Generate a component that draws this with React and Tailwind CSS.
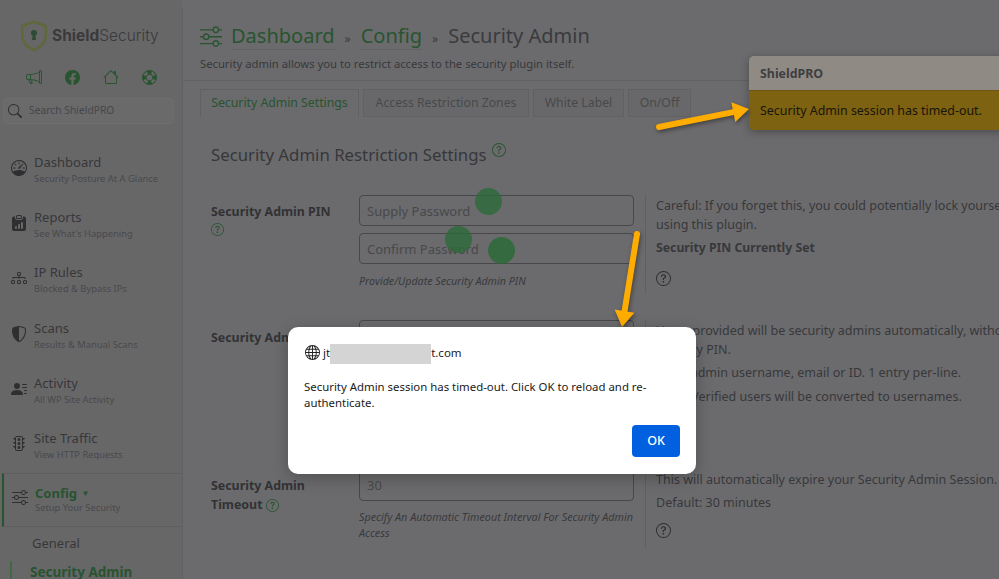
import React from "react";
import { BsSpeedometer, BsClipboardDataFill, BsDiagram3, BsShieldShaded, BsPersonLinesFill, BsStoplights, BsSliders, BsQuestionCircle, BsGlobe, BsMegaphone, BsFacebook, BsHouse, BsLifePreserver, BsSearch } from "react-icons/bs";

const nav = [
  { Icon: BsSpeedometer, t: "Dashboard", s: "Security Posture At A Glance" },
  { Icon: BsClipboardDataFill, t: "Reports", s: "See What's Happening" },
  { Icon: BsDiagram3, t: "IP Rules", s: "Blocked & Bypass IPs" },
  { Icon: BsShieldShaded, t: "Scans", s: "Results & Manual Scans" },
  { Icon: BsPersonLinesFill, t: "Activity", s: "All WP Site Activity" },
  { Icon: BsStoplights, t: "Site Traffic", s: "View HTTP Requests" },
];

function Sidebar() {
  return (
    <aside className="w-[182px] h-[579px] shrink-0 bg-[#676768] overflow-hidden">
      <div className="flex items-center pl-[20px] pt-[19px] h-[52px]">
        <svg width="28" height="32" viewBox="0 0 28 32" className="shrink-0">
          <path d="M14 1.8 L25.8 6 V15 C25.8 22.5 20.5 27.5 14 30.2 C7.5 27.5 2.2 22.5 2.2 15 V6 Z" fill="none" stroke="#5f683b" strokeWidth="2.6" strokeLinejoin="round" />
          <circle cx="14" cy="13" r="3" fill="#2f4a35" />
          <path d="M12.8 14 H15.2 L16 20 H12 Z" fill="#2f4a35" />
        </svg>
        <span className="ml-[4px] text-[15.5px] leading-none text-[#3a3a3c] font-['Inter',sans-serif] font-light whitespace-nowrap"><b className="font-bold">Shield</b>Security</span>
      </div>
      <div className="flex justify-between items-center pl-[26px] pr-[25px] mt-[17px] text-[#285430]">
        <BsMegaphone size={16} />
        <BsFacebook size={15} />
        <BsHouse size={16} />
        <BsLifePreserver size={15} />
      </div>
      <div className="mx-[3px] mt-[13px] h-[26px] w-[171px] rounded-[4px] border border-[#6e6e6f] bg-[#6a6a6b] flex items-center pl-[4px] text-[#2f2f31]">
        <BsSearch size={14} />
        <span className="ml-[7px] text-[10.3px] text-[#47474a]">Search ShieldPRO</span>
      </div>
      <ul className="mt-[29px]">
        {nav.map(({ Icon, t, s }) => (
          <li key={t} className="h-[55.2px] pl-[11px] flex text-[#333336]">
            <Icon size={16} className="mt-[7px] shrink-0 text-[#2f2f31]" />
            <div className="ml-[7px]">
              <div className="text-[13px] leading-[18px] text-[#37373a]">{t}</div>
              <div className="text-[9.35px] leading-[14px] mt-[1px] text-[#49494c]">{s}</div>
            </div>
          </li>
        ))}
        <li className="h-[54px] -mt-[11px] ml-[2px] border-l-2 border-y border-l-[#285430] border-y-[#5f5f60] pl-[8px] flex">
          <BsSliders size={16} className="mt-[15px] shrink-0 text-[#2f2f31]" />
          <div className="ml-[7px] mt-[10px]">
            <div className="text-[13px] leading-[18px] font-bold text-[#285430]">Config <span className="text-[8px] align-[2px] ml-[1px]">▼</span></div>
            <div className="text-[9.35px] leading-[14px] -mt-[1px] text-[#49494c]">Setup Your Security</div>
          </div>
        </li>
        <li className="pl-[32px] mt-[7px] text-[13px] leading-[18px] text-[#37373a]">General</li>
        <li className="ml-[10px] mt-[9px] pl-[18px] border-l-2 border-[#3f6a45] text-[13.5px] leading-[22px] font-bold text-[#285430] whitespace-nowrap">Security Admin</li>
      </ul>
    </aside>
  );
}

const Help = ({ className = "" }) => <BsQuestionCircle size={13} className={"inline-block text-[#285430] " + className} />;
const Q = ({ className = "" }) => <BsQuestionCircle size={15} className={"text-[#2d2d30] " + className} />;

function Input({ ph, val }) {
  return (
    <div className={"h-[31px] w-[275px] rounded-[4px] border border-[#48484b] px-[7px] flex items-center text-[13px] text-[#48484b] " + (ph ? "pt-[2px]" : "pt-[1px]")}>{ph || val}</div>
  );
}

function Row({ label, children, right, className = "", labelClass = "pt-[7px]" }) {
  return (
    <div className={"flex " + className}>
      <div className={"w-[148px] shrink-0 text-[12.4px] leading-[19px] font-bold text-[#323235] " + labelClass}>{label}</div>
      <div className="w-[275px] shrink-0">{children}</div>
      <div className="ml-[11px] pl-[10px] border-l border-[#5f5f60] w-[420px] shrink-0 text-[12.5px] text-[#38383b]">{right}</div>
    </div>
  );
}

function Main() {
  return (
    <main className="flex-1 min-w-0 h-[579px] overflow-hidden border-l border-[#616162] mt-[8px]">
      <header className="pl-[17px] pt-[13px] h-[73px] border-b border-[#616162]">
        <div className="flex items-center h-[30px] text-[20px] leading-[30px] text-[#3a3a3d]">
          <BsSliders size={22} className="text-[#285430]" />
          <a className="ml-[9px] text-[#285430] border-b border-[#616162] leading-[27px]">Dashboard</a>
          <span className="mx-[10px] text-[12px] mt-[6px]">»</span>
          <a className="text-[#285430] border-b border-[#616162] leading-[27px]">Config</a>
          <span className="mx-[10px] text-[12px] mt-[6px]">»</span>
          <span>Security Admin</span>
        </div>
        <p className="mt-[6px] text-[11.25px] leading-[14px] text-[#38383b]">Security admin allows you to restrict access to the security plugin itself.</p>
      </header>
      <div className="flex pl-[17px] mt-[8px] gap-[4px] text-[12.25px] text-[#48484b]">
        <div className="h-[28px] w-[159px] flex items-center justify-center border border-b-0 border-[#616162] text-[#285430]">Security Admin Settings</div>
        <div className="h-[28px] w-[166px] flex items-center justify-center border border-[#616162] bg-[#68686a]">Access Restriction Zones</div>
        <div className="h-[28px] w-[91px] flex items-center justify-center border border-[#616162] bg-[#68686a]">White Label</div>
        <div className="h-[28px] w-[63px] flex items-center justify-center border border-[#616162] bg-[#68686a]">On/Off</div>
      </div>
      <div className="pl-[28px]">
        <h2 className="mt-[25px] text-[16.8px] leading-[26px] text-[#37373a] flex">Security Admin Restriction Settings<Help className="ml-[5px] mt-[1px] w-[14px] h-[14px]" /></h2>
        <Row className="mt-[27px] h-[98px]" label={<>Security Admin PIN<br /><Help className="-mt-[5px]" /></>} right={<div className="pt-[1px]">
          <p className="leading-[19px] whitespace-nowrap">Careful: If you forget this, you could potentially lock yourself out from<br />using this plugin.</p>
          <p className="leading-[19px] mt-[4px] font-bold text-[12.25px]">Security PIN Currently Set</p>
          <Q className="mt-[14px]" />
        </div>}>
          <Input ph="Supply Password" />
          <div className="mt-[7px]"><Input ph="Confirm Password" /></div>
          <p className="mt-[9px] text-[10.7px] leading-[16px] italic text-[#3a3a3d]">Provide/Update Security Admin PIN</p>
        </Row>
        <Row className="mt-[27px] h-[123px]" labelClass="pt-[8px]" label="Security Admin Users" right={<div className="pt-[1px]">
          <p className="leading-[19px] whitespace-nowrap">Users provided will be security admins automatically, without needing the<br />Security PIN.</p>
          <p className="leading-[19px] mt-[4px]">Enter admin username, email or ID. 1 entry per-line.</p>
          <p className="leading-[19px] mt-[5px]">Note: Verified users will be converted to usernames.</p>
        </div>}>
          <div className="h-[123px] rounded-[4px] border border-[#48484b]" />
        </Row>
        <Row className="mt-[27px] h-[78px]" labelClass="pt-[6px]" label={<>Security Admin<br />Timeout <Help /></>} right={<>
          <p className="leading-[19px]">This will automatically expire your Security Admin Session.</p>
          <p className="leading-[19px] mt-[4px]">Default: 30 minutes</p>
          <Q className="mt-[11px]" />
        </>}>
          <Input val="30" />
          <p className="mt-[8px] text-[10.8px] leading-[16px] italic text-[#3a3a3d]">Specify An Automatic Timeout Interval For Security Admin Access</p>
        </Row>
      </div>
    </main>
  );
}

function Arrow({ x1, y1, x2, y2, left, top, w, h }) {
  const dx = x2 - x1, dy = y2 - y1, len = Math.hypot(dx, dy);
  const ux = dx / len, uy = dy / len;
  const bx = x2 - ux * 16, by = y2 - uy * 16;
  const px = -uy * 10, py = ux * 10;
  return (
    <svg width={w} height={h} className="absolute" style={{ left, top, filter: "drop-shadow(1px 2px 2px rgba(0,0,0,.4))" }}>
      <line x1={x1 - left} y1={y1 - top} x2={bx - left} y2={by - top} stroke="#ffac00" strokeWidth="6" strokeLinecap="round" />
      <polygon points={`${x2 - left},${y2 - top} ${bx + px - left},${by + py - top} ${bx - px - left},${by - py - top}`} fill="#ffac00" />
    </svg>
  );
}

export default function App() {
  return (
    <div className="relative w-[999px] h-[579px] overflow-hidden flex bg-[#6b6b6d] font-['Noto_Sans',sans-serif]">
      <Sidebar />
      <Main />

      <div className="absolute left-[475px] top-[188px] w-[27px] h-[27px] rounded-full bg-[#2c6a38]/80" />
      <div className="absolute left-[445px] top-[226px] w-[27px] h-[27px] rounded-full bg-[#2c6a38]/80" />
      <div className="absolute left-[488px] top-[237px] w-[27px] h-[27px] rounded-full bg-[#2c6a38]/85" />

      <div className="absolute left-[749px] top-[56px] w-[260px] h-[74px] rounded-[5px] overflow-hidden shadow-[0_2px_8px_rgba(0,0,0,0.3)] text-[12.4px]">
        <div className="h-[34px] bg-[#8f8a84] pl-[11px] pt-[2px] flex items-center font-bold text-[#3f3f41]">ShieldPRO</div>
        <div className="h-[40px] bg-[#7d6211] border-t border-[#6d5510] pl-[11px] pt-[1px] flex items-center text-[#18150a]">Security Admin session has timed-out.</div>
      </div>

      <Arrow x1={659} y1={127} x2={749} y2={109} left={650} top={95} w={105} h={45} />
      <Arrow x1={637} y1={234} x2={622} y2={327} left={605} top={225} w={45} h={110} />

      <div className="absolute left-[288px] top-[327px] w-[408px] h-[147px] rounded-[10px] bg-white text-[11.4px] text-[#1a1a1a] shadow-[0_4px_16px_rgba(0,0,0,0.25)]">
        <div className="relative flex items-center pl-[17px] pt-[15px] h-[36px]">
          <BsGlobe size={15} className="text-[#222]" />
          <span className="ml-[3px] text-[11.5px]">jt<span className="inline-block w-[101px] h-[20px] -my-[4px] align-middle bg-[#d4d4d4]" />t.com</span>
        </div>
        <p className="mx-[16px] mt-[16px] leading-[16px] w-[360px]">Security Admin session has timed-out. Click OK to reload and re-authenticate.</p>
        <div className="flex justify-end pr-[16px] mt-[14px]">
          <button className="w-[48px] h-[32px] rounded-[4px] bg-[#0060df] text-white text-[12.5px] font-medium">OK</button>
        </div>
      </div>
    </div>
  );
}
